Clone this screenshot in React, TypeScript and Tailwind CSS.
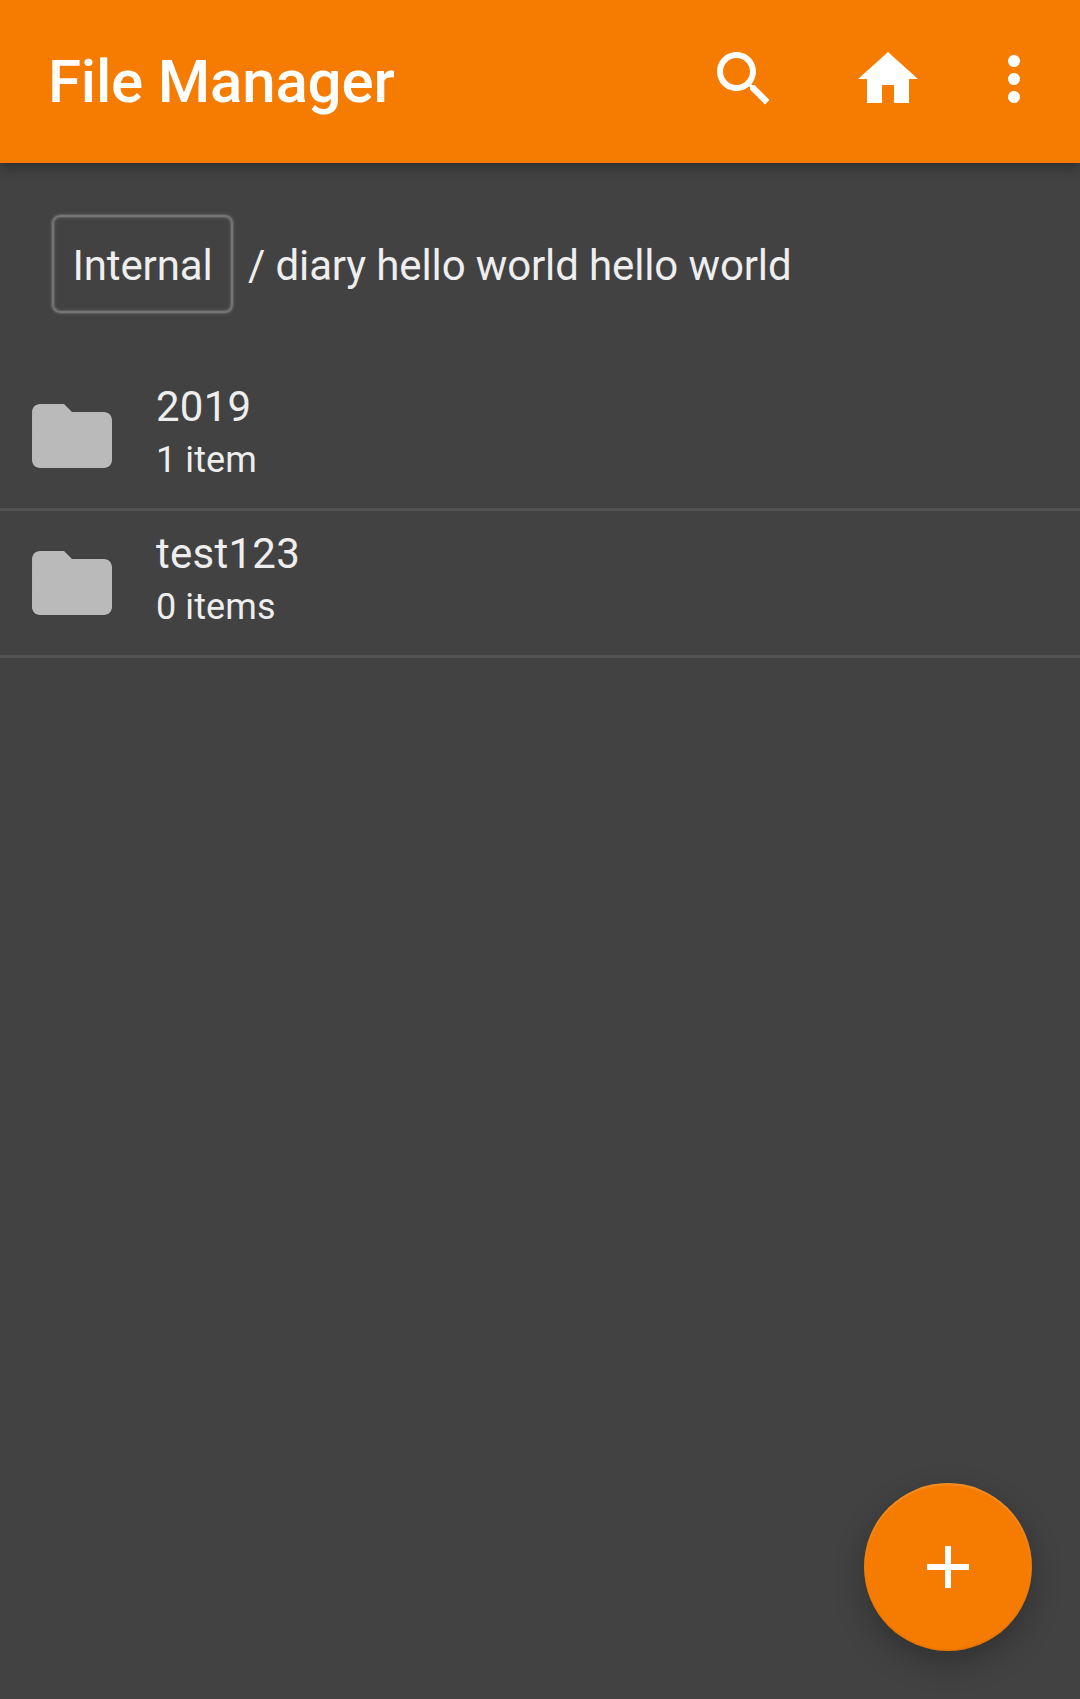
import React from "react";

const folders = [
  { name: "2019", count: "1 item" },
  { name: "test123", count: "0 items" },
];

function Icon({ d, className }: { d: string; className: string }) {
  return (
    <svg viewBox="0 0 24 24" fill="currentColor" className={className}>
      <path d={d} />
    </svg>
  );
}

const SEARCH =
  "M15.5 14h-.79l-.28-.27C15.41 12.59 16 11.11 16 9.5 16 5.91 13.09 3 9.5 3S3 5.91 3 9.5 5.91 16 9.5 16c1.61 0 3.09-.59 4.23-1.57l.27.28v.79l5 4.99L20.49 19l-4.99-5zm-6 0C7.01 14 5 11.99 5 9.5S7.01 5 9.5 5 14 7.01 14 9.5 11.99 14 9.5 14z";
const HOME = "M10 20v-6h4v6h5v-8h3L12 3 2 12h3v8z";
const MORE =
  "M12 8c1.1 0 2-.9 2-2s-.9-2-2-2-2 .9-2 2 .9 2 2 2zm0 2c-1.1 0-2 .9-2 2s.9 2 2 2 2-.9 2-2-.9-2-2-2zm0 6c-1.1 0-2 .9-2 2s.9 2 2 2 2-.9 2-2-.9-2-2-2z";
const ADD = "M19 13h-6v6h-2v-6H5v-2h6V5h2v6h6v2z";
const FOLDER =
  "M10 4H4c-1.1 0-1.99.9-1.99 2L2 18c0 1.1.9 2 2 2h16c1.1 0 2-.9 2-2V8c0-1.1-.9-2-2-2h-8l-2-2z";

export default function App() {
  return (
    <div className="relative flex h-[1699px] w-[1080px] flex-col overflow-hidden bg-[#424242] font-['Roboto',sans-serif] text-[#eeeeee]">
      <header className="z-10 flex h-[163px] shrink-0 items-center bg-[#f57c00] pl-12 text-white shadow-[0_4px_12px_rgba(0,0,0,0.32)]">
        <h1 className="flex-1 text-[60px] leading-[70px] font-medium tracking-[-0.18px] whitespace-nowrap">File Manager</h1>
        <Icon d={SEARCH} className="mb-1.5 size-[72px]" />
        <Icon d={HOME} className="mb-1.5 ml-[72px] size-[72px]" />
        <Icon d={MORE} className="mr-[30px] mb-1.5 ml-[54px] size-[72px]" />
      </header>
      <nav className="flex h-[201px] shrink-0 items-center pl-[52px] text-[42px] tracking-[-0.13px]">
        <span className="flex h-[98px] w-[181px] items-center justify-center rounded-[8px] border-2 border-[#747474] pt-1 shadow-[0_0_3px_#858585,inset_0_0_3px_#858585]">
          Internal
        </span>
        <span className="ml-[15px] pt-1 whitespace-nowrap">/ diary hello world hello world</span>
      </nav>
      <ul>
        {folders.map((f) => (
          <li key={f.name} className="flex h-[147px] items-center border-b-3 border-[#535353]">
            <Icon d={FOLDER} className="ml-6 size-24 text-[#bababa]" />
            <div className="ml-9 pb-[6px]">
              <div className="text-[42px] leading-[53px] tracking-[0.25px]">{f.name}</div>
              <div className="pt-px text-[36px] leading-[53px] tracking-[0.1px]">{f.count}</div>
            </div>
          </li>
        ))}
      </ul>
      <button className="absolute right-12 bottom-12 flex size-[168px] items-center justify-center rounded-full bg-[#f57c00] text-white shadow-[0_12px_30px_rgba(0,0,0,0.25),inset_0_2px_2px_rgba(255,255,255,0.15),inset_0_-2px_2px_rgba(0,0,0,0.06)]">
        <Icon d={ADD} className="size-[72px]" />
      </button>
    </div>
  );
}
